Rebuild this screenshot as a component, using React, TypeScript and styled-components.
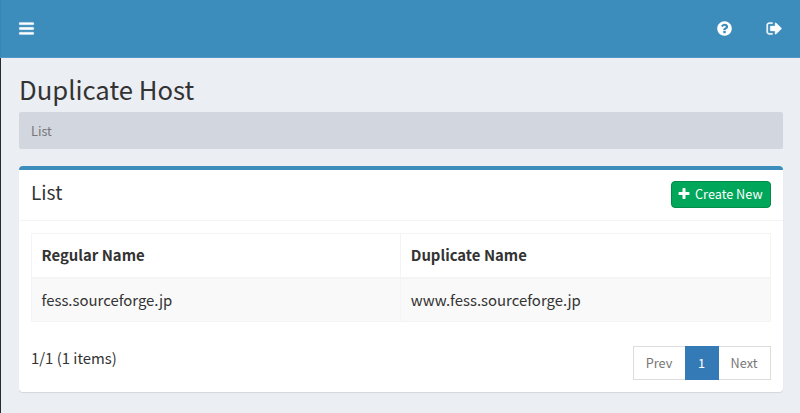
import React from "react";
import styled, { createGlobalStyle } from "styled-components";

const GlobalStyle = createGlobalStyle`
  * { box-sizing: border-box; }
  body {
    margin: 0;
    background: #ecf0f5;
    color: #333;
    font-family: "Noto Sans CJK JP", "Noto Sans", sans-serif;
    font-size: 14.9px;
  }
`;

const Page = styled.div`
  height: 413px;
  overflow: hidden;
  background: #ebeef3;
  display: flex;
  flex-direction: column;
`;

const Navbar = styled.header`
  height: 58px;
  flex: none;
  background: #3c8dbc;
  border-bottom: 1px solid #5499c6;
  border-left: 1px solid #3984b0;
  display: flex;
  align-items: center;
  justify-content: space-between;
  padding: 0 17px 0 17px;
`;

const NavActions = styled.div`
  display: flex;
  gap: 33px;
`;

const IconButton = styled.button`
  border: 0;
  padding: 0;
  background: none;
  color: #fff;
  display: flex;
`;

const Glyph = styled.svg<{ $size: number; $stroke: number }>`
  width: ${(p) => p.$size}px;
  height: ${(p) => p.$size}px;
  fill: currentColor;
  stroke: currentColor;
  stroke-width: ${(p) => p.$stroke};
  overflow: visible;
  flex: none;
`;

const Content = styled.main`
  flex: 1;
  border-left: 1px solid #222d32;
  padding: 14px 17.5px 0 18px;
`;

const PageTitle = styled.h1`
  margin: 0;
  height: 40px;
  line-height: 34px;
  font-size: 25.7px;
  font-weight: 400;
`;

const Breadcrumb = styled.nav`
  height: 36.5px;
  line-height: 37px;
  padding: 0 12px;
  border-radius: 2px;
  background: #d2d6de;
  color: #777;
  font-size: 12.7px;
`;

const Card = styled.section`
  margin-top: 17.5px;
  height: 225.5px;
  background: #fff;
  border-top: 4px solid #3c8dbc;
  border-radius: 4px;
  box-shadow: 0 1px 1px rgba(0, 0, 0, 0.1);
`;

const CardHeader = styled.div`
  height: 51px;
  border-bottom: 1px solid #f4f4f4;
  padding: 11px 12px 0;
  display: flex;
  justify-content: space-between;
`;

const CardTitle = styled.h3`
  margin: 0;
  font-size: 19.1px;
  font-weight: 400;
  line-height: 22px;
`;

const CreateButton = styled.button`
  width: 100px;
  height: 27px;
  padding: 0 0 1px 5.5px;
  display: flex;
  align-items: center;
  gap: 4px;
  background: #00a65a;
  border: 1px solid #008d4c;
  border-radius: 4px;
  color: #fff;
  font: inherit;
  font-size: 12.7px;
  line-height: 24px;
  white-space: nowrap;
`;

const CardBody = styled.div`
  padding: 12px 12px 0;
`;

const Table = styled.table`
  width: 739.5px;
  table-layout: fixed;
  border-collapse: collapse;
  text-align: left;
`;

const HeadCell = styled.th`
  height: 44px;
  padding: 0 9px 1px 9.5px;
  border: 1px solid #f4f4f4;
  border-bottom-width: 2px;
  font-weight: 700;
  line-height: 22px;
`;

const Cell = styled.td`
  height: 44px;
  padding: 0 9px 0 9.5px;
  border: 1px solid #f4f4f4;
  background: #f9f9f9;
  line-height: 22px;
`;

const CardFooter = styled.div`
  margin-top: 24px;
  display: flex;
  justify-content: space-between;
`;

const ItemCount = styled.span`
  line-height: 23px;
`;

const Pager = styled.div`
  display: flex;
  height: 34px;
  font-size: 12.7px;
`;

const PageLink = styled.a<{ $width: number; $active?: boolean }>`
  width: ${(p) => p.$width}px;
  margin-left: -1px;
  border: 1px solid ${(p) => (p.$active ? "#337ab7" : "#ddd")};
  background: ${(p) => (p.$active ? "#337ab7" : "#fff")};
  color: ${(p) => (p.$active ? "#fff" : "#777")};
  position: relative;
  z-index: ${(p) => (p.$active ? 1 : 0)};
  text-align: center;
  line-height: 32px;
`;

const paths = {
  bars: "M1664 1344v128q0 26-19 45t-45 19h-1408q-26 0-45-19t-19-45v-128q0-26 19-45t45-19h1408q26 0 45 19t19 45zm0-512v128q0 26-19 45t-45 19h-1408q-26 0-45-19t-19-45v-128q0-26 19-45t45-19h1408q26 0 45 19t19 45zm0-512v128q0 26-19 45t-45 19h-1408q-26 0-45-19t-19-45v-128q0-26 19-45t45-19h1408q26 0 45 19t19 45z",
  help: "M1024 1376v-192q0-14-9-23t-23-9h-192q-14 0-23 9t-9 23v192q0 14 9 23t23 9h192q14 0 23-9t9-23zm256-672q0-88-55.5-163t-138.5-116-170-41q-243 0-371 213-15 24 8 42l132 100q7 6 19 6 16 0 25-12 53-68 86-92 34-24 86-24 48 0 85.5 26t37.5 59q0 38-20 61t-68 45q-63 28-115.5 86.5t-52.5 125.5v36q0 14 9 23t23 9h192q14 0 23-9t9-23q0-19 21.5-49.5t54.5-49.5q32-18 49-28.5t46-35 44.5-48 28-60.5 12.5-81zm384 192q0 209-103 385.5t-279.5 279.5-385.5 103-385.5-103-279.5-279.5-103-385.5 103-385.5 279.5-279.5 385.5-103 385.5 103 279.5 279.5 103 385.5z",
  signOut: "M704 1440q0 4 1 20t.5 26.5-3 23.5-10 19.5-20.5 6.5h-320q-119 0-203.5-84.5t-84.5-203.5v-704q0-119 84.5-203.5t203.5-84.5h320q13 0 22.5 9.5t9.5 22.5q0 4 1 20t.5 26.5-3 23.5-10 19.5-20.5 6.5h-320q-66 0-113 47t-47 113v704q0 66 47 113t113 47h312l11.5 1 11.5 3 8 5.5 7 9 2 13.5zm928-544q0 26-19 45l-544 544q-19 19-45 19t-45-19-19-45v-288h-448q-26 0-45-19t-19-45v-384q0-26 19-45t45-19h448v-288q0-26 19-45t45-19 45 19l544 544q19 19 19 45z",
  plus: "M1600 736v192q0 40-28 68t-68 28h-416v416q0 40-28 68t-68 28h-192q-40 0-68-28t-28-68v-416h-416q-40 0-68-28t-28-68v-192q0-40 28-68t68-28h416v-416q0-40 28-68t68-28h192q40 0 68 28t28 68v416h416q40 0 68 28t28 68z",
};

interface IconProps {
  name: keyof typeof paths;
  size: number;
  stroke?: number;
}

function Icon({ name, size, stroke = 0 }: IconProps) {
  return (
    <Glyph $size={size} $stroke={stroke} viewBox="0 0 1792 1792" aria-hidden="true">
      <path d={paths[name]} />
    </Glyph>
  );
}

const hosts = [{ regular: "fess.sourceforge.jp", duplicate: "www.fess.sourceforge.jp" }];

export default function App() {
  return (
    <Page>
      <GlobalStyle />
      <Navbar>
        <IconButton aria-label="Toggle navigation">
          <Icon name="bars" size={17} stroke={25} />
        </IconButton>
        <NavActions>
          <IconButton aria-label="Help">
            <Icon name="help" size={17} />
          </IconButton>
          <IconButton aria-label="Log out">
            <Icon name="signOut" size={17} stroke={40} />
          </IconButton>
        </NavActions>
      </Navbar>
      <Content>
        <PageTitle>Duplicate Host</PageTitle>
        <Breadcrumb>List</Breadcrumb>
        <Card>
          <CardHeader>
            <CardTitle>List</CardTitle>
            <CreateButton>
              <Icon name="plus" size={14} />
              Create New
            </CreateButton>
          </CardHeader>
          <CardBody>
            <Table>
              <thead>
                <tr>
                  <HeadCell>Regular Name</HeadCell>
                  <HeadCell>Duplicate Name</HeadCell>
                </tr>
              </thead>
              <tbody>
                {hosts.map((h) => (
                  <tr key={h.duplicate}>
                    <Cell>{h.regular}</Cell>
                    <Cell>{h.duplicate}</Cell>
                  </tr>
                ))}
              </tbody>
            </Table>
            <CardFooter>
              <ItemCount>1/1 (1 items)</ItemCount>
              <Pager>
                <PageLink $width={53}>Prev</PageLink>
                <PageLink $width={34} $active>1</PageLink>
                <PageLink $width={53}>Next</PageLink>
              </Pager>
            </CardFooter>
          </CardBody>
        </Card>
      </Content>
    </Page>
  );
}
